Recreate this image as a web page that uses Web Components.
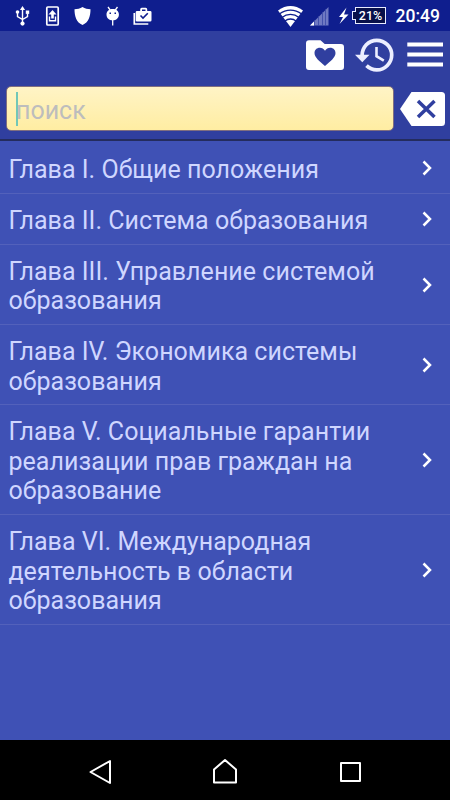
<!DOCTYPE html>
<html lang="ru">
<head>
<meta charset="utf-8">
<title>Глава</title>
<style>
    html, body {
        margin: 0;
        height: 100%;
        overflow: hidden;
        font-family: Roboto, "Noto Sans", sans-serif;
    }
</style>
</head>
<body>
<law-app></law-app>

<script>
class StatusBar extends HTMLElement {
    constructor() {
        super();
        this.attachShadow({ mode: 'open' });

        this.shadowRoot.innerHTML = `
            <style>
                :host {
                    display: flex;
                    justify-content: space-between;
                    height: 31px;
                    background: #0f1e8e;
                    color: #fff;
                }
                svg { display: block; flex: none; }
                .right { display: flex; }
                .battery {
                    display: flex;
                    align-items: center;
                    justify-content: center;
                    box-sizing: border-box;
                    position: relative;
                    width: 31px;
                    height: 17px;
                    margin: 7px 0 0 4px;
                    border: 1px solid #e8ebff;
                    background: #08104a;
                    font-size: 12.5px;
                    font-weight: 500;
                }
                .battery::before {
                    content: "";
                    position: absolute;
                    left: -4px;
                    top: 3px;
                    width: 3px;
                    height: 7px;
                    border: 1px solid #e8ebff;
                    border-right: none;
                    background: #08104a;
                }
                time {
                    width: 44px;
                    margin: 0 10.5px 0 9.5px;
                    font-size: 17.5px;
                    font-weight: 500;
                    line-height: 33px;
                    white-space: nowrap;
                }
            </style>
            <svg width="160" height="31" viewBox="0 0 160 31" fill="#fff">
                <g fill="none" stroke="#fff" stroke-width="1.4">
                    <path d="M22.5 9v14M17.5 12v4.5l5 3 5-3v-3"/>
                </g>
                <path d="M22.5 6l2.6 4h-5.2z"/>
                <circle cx="22.5" cy="23.6" r="2.1"/>
                <circle cx="17.5" cy="12" r="1.8"/>
                <path d="M25.8 10.5h3.4v3.4h-3.4z"/>
                <rect x="46.8" y="7" width="11.4" height="18" rx="1" fill="none" stroke="#fff" stroke-width="1.7"/>
                <path d="M52.5 10l4 4.5h-2.7v4h-2.6v-4h-2.7z"/>
                <path d="M49.5 16.5v4.2h6v-4.2" fill="none" stroke="#fff" stroke-width="1.4"/>
                <path d="M82.5 7c2.5 1.7 5 2.2 8 2.2 0 7-1.8 13-8 15.8-6.2-2.8-8-8.8-8-15.8 3 0 5.5-.5 8-2.2z"/>
                <path d="M108 7l2.2 3M117.5 7l-2.2 3M112.7 19v6.5" stroke="#fff" stroke-width="1.3"/>
                <path d="M106.5 14.5c0-3.5 2.7-5.5 6.2-5.5s6.2 2 6.2 5.5-2.7 5.8-6.2 5.8-6.2-2.3-6.2-5.8z"/>
                <path d="M109.5 12.5h1.5v1.5h-1.5zM114.5 12.5h1.5v1.5h-1.5z" fill="#0f1e8e"/>
                <path d="M137 11h3.2v-1.7q0-1.5 1.5-1.5h4q1.5 0 1.5 1.5v1.7h3q1.3 0 1.3 1.3v8q0 1.2-1.3 1.2h-13.2q-1.3 0-1.3-1.2v-8q0-1.3 1.3-1.3z"/>
                <path d="M142 9.5h3.5v1.5h-3.5z" fill="#0f1e8e"/>
                <path d="M140.5 15.5l2.5 2.5 4.8-4.8" fill="none" stroke="#0f1e8e" stroke-width="1.6"/>
                <path d="M134.3 13v11h14" fill="none" stroke="#fff" stroke-width="1.7"/>
            </svg>
            <div class="right">
                <svg width="76" height="31" viewBox="275 0 76 31" fill="#fff">
                    <path d="M278 10.5q12.5-8.8 25 0L290.5 27z"/>
                    <g fill="none" stroke="#0f1e8e" stroke-width="1.3">
                        <path d="M279 14.2q11.5-8 23 0M281.5 17.7q9-6.5 18 0M284.5 21.2q6-4.4 12 0"/>
                    </g>
                    <path d="M310 25.5L328.5 7v18.5z" fill="#6f79c2"/>
                    <path d="M310 25.5l4-4v4z"/>
                    <path d="M314.5 20v6M318.5 16v10M322.5 12v14M325.5 9v17" stroke="#3a47a6" stroke-width=".8"/>
                    <path d="M346.5 7.5l-7.5 9.5h4l-3.5 7 9-9.5h-4.5z"/>
                </svg>
                <div class="battery">21%</div>
                <time>20:49</time>
            </div>
        `;
    }
}

class ToolBar extends HTMLElement {
    constructor() {
        super();
        this.attachShadow({ mode: 'open' });

        this.shadowRoot.innerHTML = `
            <style>
                :host {
                    display: flex;
                    justify-content: flex-end;
                    height: 48px;
                }
                svg { display: block; }
            </style>
            <svg width="155" height="48" viewBox="295 31 155 48">
                <path d="M309 40.3h11.500l4.200 3.700H341q3 0 3 3v20q0 3-3 3h-32q-3 0-3-3V43.3q0-3 3-3z" fill="#fff"/>
                <path d="M325 66c-5.5-5-10.5-8.3-10.5-13 0-3.2 2.3-5.3 5.3-5.3 2.2 0 4 1.2 5.2 3 1.2-1.8 3-3 5.2-3 3 0 5.3 2.1 5.3 5.3 0 4.700-5 8-10.500 13z" fill="#303f9f"/>
                <g fill="none" stroke="#eceeff">
                    <path d="M362 56c0-9 6.5-15.7 14.8-15.7 8.2 0 14.9 6.7 14.9 14.7s-6.7 14.9-14.9 14.9c-4.2 0-7.5-1.5-10.3-4.2" stroke-width="3.7"/>
                    <path d="M376.5 47v9.2l7.3 4.4" stroke-width="2.6"/>
                </g>
                <path d="M355 54.8h14.5l-7.2 7.5z" fill="#eceeff"/>
                <path d="M407.3 44.5h35.7M407.3 54.5h35.7M407.3 64.5h35.7" stroke="#fff" stroke-width="3.8"/>
            </svg>
        `;
    }
}

class SearchBox extends HTMLElement {
    constructor() {
        super();
        this.attachShadow({ mode: 'open' });

        this.shadowRoot.innerHTML = `
            <style>
                :host {
                    display: flex;
                    box-sizing: border-box;
                    height: 62px;
                    padding: 7px 4px 0 6px;
                    border-bottom: 2px solid #242c5e;
                }
                .field {
                    display: flex;
                    align-items: center;
                    box-sizing: border-box;
                    width: 388px;
                    height: 45px;
                    padding-left: 9px;
                    border: 1px solid #806f80;
                    border-radius: 5px;
                    background: linear-gradient(#fff4c6, #ffeda2);
                    color: #bdbdbd;
                    font-size: 25px;
                }
                .hint { padding-top: 3px; }
                .caret {
                    width: 2px;
                    height: 34px;
                    margin-right: -2px;
                    background: #72c7b7;
                }
                svg { display: block; margin-left: 5px; }
            </style>
            <div class="field"><span class="caret"></span><span class="hint"><slot></slot></span></div>
            <svg width="47" height="45" viewBox="399 86 47 45">
                <path d="M411.5 92h30q3.5 0 3.5 3.5v27q0 3.5-3.5 3.5h-30L400 109z" fill="#fff"/>
                <path d="M418 101l16.5 16M434.5 101l-16.5 16" stroke="#303f9f" stroke-width="3.5"/>
            </svg>
        `;
    }
}

class ChapterRow extends HTMLElement {
    constructor() {
        super();
        this.attachShadow({ mode: 'open' });

        this.shadowRoot.innerHTML = `
            <style>
                :host {
                    display: flex;
                    align-items: center;
                    padding: 12.1px 16px 8.4px 8.5px;
                    border-bottom: 1px solid #5361bb;
                    color: #cfd6ff;
                    font-size: 25px;
                    line-height: 29.4px;
                    letter-spacing: .03px;
                }
                .title { flex: 1; }
                svg { display: block; flex: none; margin: -3.4px 0 0 20px; }
            </style>
            <div class="title"><slot></slot></div>
            <svg width="14" height="18" viewBox="0 0 14 18">
                <path d="M3.5 2.5L10 9l-6.5 6.5" fill="none" stroke="#fff" stroke-width="2.5"/>
            </svg>
        `;
    }
}

class NavBar extends HTMLElement {
    constructor() {
        super();
        this.attachShadow({ mode: 'open' });

        this.shadowRoot.innerHTML = `
            <style>
                :host {
                    display: flex;
                    height: 60px;
                    justify-content: center;
                    background: #000;
                }
            </style>
            <svg width="450" height="60" viewBox="0 740 450 60" fill="none" stroke="#fff" stroke-width="2" stroke-linejoin="round">
                <path d="M110 761v22l-19.5-11z"/>
                <path d="M214 782.5v-13l11-9.5 11 9.5v13z"/>
                <path d="M341 763h19v18h-19z"/>
            </svg>
        `;
    }
}

class LawApp extends HTMLElement {
    constructor() {
        super();
        this.attachShadow({ mode: 'open' });

        this.shadowRoot.innerHTML = `
            <style>
                :host {
                    display: flex;
                    flex-direction: column;
                    height: 100vh;
                    background: #3f51b5;
                }
                header {
                    background: #303f9f;
                }
                main {
                    flex: 1;
                    padding-top: 2px;
                }
            </style>
            <status-bar></status-bar>
            <header>
                <tool-bar></tool-bar>
                <search-box>поиск</search-box>
            </header>
            <main>
                <chapter-row>Глава I. Общие положения</chapter-row>
                <chapter-row>Глава II. Система образования</chapter-row>
                <chapter-row>Глава III. Управление системой образования</chapter-row>
                <chapter-row>Глава IV. Экономика системы образования</chapter-row>
                <chapter-row>Глава V. Социальные гарантии реализации прав граждан на образование</chapter-row>
                <chapter-row>Глава VI. Международная деятельность в области образования</chapter-row>
            </main>
            <nav-bar></nav-bar>
        `;
    }
}

customElements.define('status-bar', StatusBar);
customElements.define('tool-bar', ToolBar);
customElements.define('search-box', SearchBox);
customElements.define('chapter-row', ChapterRow);
customElements.define('nav-bar', NavBar);
customElements.define('law-app', LawApp);
</script>
</body>
</html>
